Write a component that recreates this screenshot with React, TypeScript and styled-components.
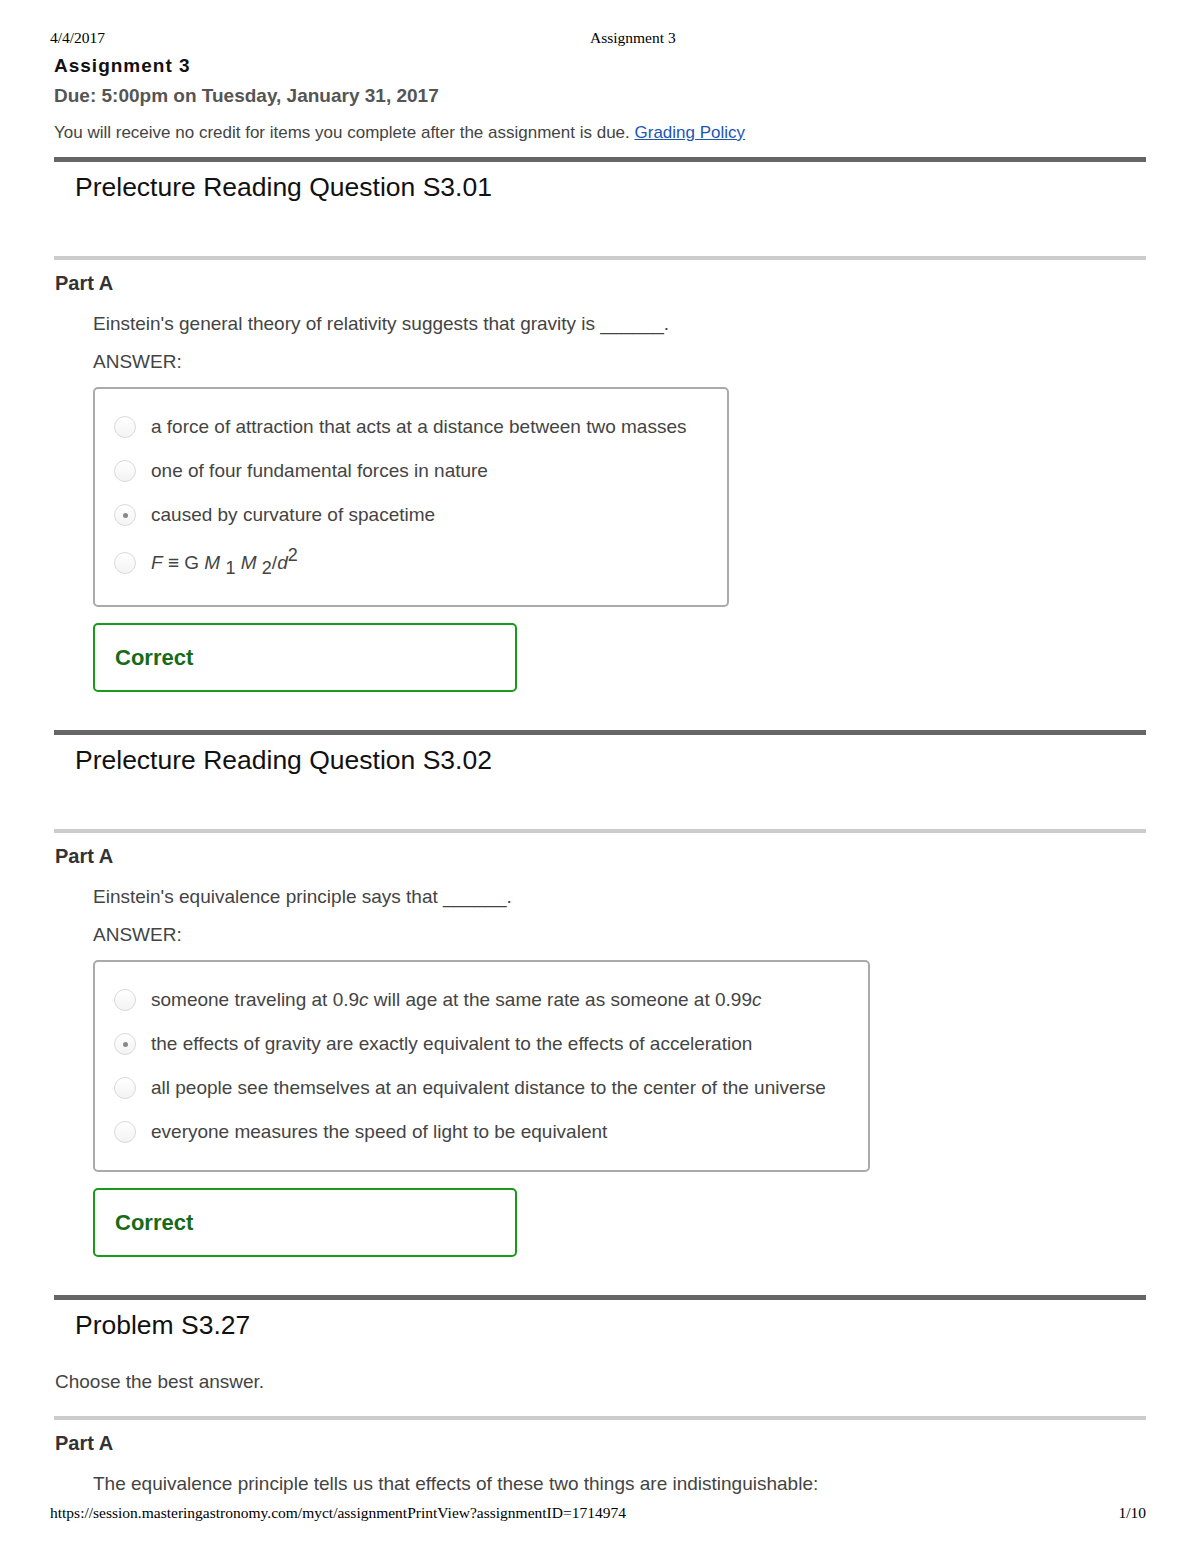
import React from 'react';
import styled, { createGlobalStyle } from 'styled-components';

const GlobalStyle = createGlobalStyle`
  html, body {
    margin: 0;
    padding: 0;
    background: #fff;
  }
  body {
    font-family: "Liberation Sans", Arial, sans-serif;
    color: #444;
  }
`;

const Page = styled.div`
  width: 1200px;
  padding-top: 30px;
  box-sizing: border-box;
`;

const PrintHeader = styled.div`
  display: grid;
  grid-template-columns: 540px 1fr;
  padding-left: 50px;
  font-family: "Liberation Serif", "Times New Roman", serif;
  font-size: 15.5px;
  line-height: 16px;
  color: #000;
`;

const Content = styled.div`
  margin: 0 54px;
`;

const AssignmentTitle = styled.h1`
  margin: 8px 0 0;
  font-size: 19px;
  line-height: 24px;
  font-weight: bold;
  letter-spacing: 1px;
  color: #111;
`;

const Due = styled.div`
  margin-top: 7px;
  font-size: 19px;
  line-height: 22px;
  font-weight: bold;
  color: #555;
`;

const Notice = styled.div`
  margin-top: 16px;
  font-size: 17px;
  line-height: 20px;
  color: #444;

  a {
    color: #1d55b5;
    text-decoration: underline;
  }
`;

const Section = styled.section<{ $first?: boolean }>`
  border-top: 5px solid #666;
  margin-top: ${p => (p.$first ? '14px' : '38px')};
`;

const SectionTitle = styled.h2`
  margin: 10px 0 0 21px;
  font-size: 26.5px;
  line-height: 30px;
  font-weight: normal;
  color: #111;
`;

const Intro = styled.div`
  margin-top: 31px;
  padding: 0 0 23px 1px;
  font-size: 19px;
  line-height: 22px;
  color: #444;
`;

const Part = styled.div`
  border-top: 4px solid #ccc;
`;

const PartTitle = styled.h3`
  margin: 11px 0 0 1px;
  font-size: 20px;
  line-height: 24px;
  font-weight: bold;
  color: #333;
`;

const PartBody = styled.div`
  padding-left: 39px;
`;

const Question = styled.p`
  margin: 18px 0 0;
  font-size: 19px;
  line-height: 22px;
  color: #444;
`;

const AnswerLabel = styled.div`
  margin-top: 16px;
  font-size: 19px;
  line-height: 22px;
  color: #444;
`;

const Options = styled.div<{ $width: number }>`
  width: ${p => p.$width}px;
  box-sizing: border-box;
  margin-top: 14px;
  padding: 16px 0 16px 19px;
  border: 2px solid #aaa;
  border-radius: 5px;
  display: flex;
  flex-direction: column;
`;

const Option = styled.label`
  display: flex;
  align-items: center;
  gap: 15px;
  min-height: 44px;
  font-size: 19px;
  line-height: 22px;
  color: #444;
`;

const Radio = styled.span<{ $checked?: boolean }>`
  width: 22px;
  height: 22px;
  flex: none;
  box-sizing: border-box;
  border: 1.5px solid #dadada;
  border-radius: 50%;
  background: linear-gradient(#fff, #f3f3f3);
  display: flex;
  align-items: center;
  justify-content: center;

  &::after {
    content: '';
    display: ${p => (p.$checked ? 'block' : 'none')};
    width: 5px;
    height: 5px;
    border-radius: 50%;
    background: #888;
  }
`;

const Formula = styled.span`
  display: inline-block;
  padding: 15px 0;
  line-height: 22px;

  sub,
  sup {
    font-size: 18px;
    line-height: 0;
  }
  sup {
    vertical-align: 8px;
  }
  sub {
    vertical-align: -5px;
  }
`;

const Result = styled.div`
  width: 424px;
  height: 69px;
  box-sizing: border-box;
  margin-top: 16px;
  padding-left: 20px;
  border: 2px solid #1a9a1a;
  border-radius: 5px;
  display: flex;
  align-items: center;
  font-size: 22px;
  font-weight: bold;
  color: #176b17;
`;

const PrintFooter = styled.div`
  display: flex;
  justify-content: space-between;
  margin-top: 10px;
  padding: 0 54px 0 50px;
  font-family: "Liberation Serif", "Times New Roman", serif;
  font-size: 15.5px;
  line-height: 16px;
  color: #000;
`;

type Choice = { label: React.ReactNode; checked?: boolean };

const MultipleChoice = ({ width, choices }: { width: number; choices: Choice[] }) => (
  <Options $width={width}>
    {choices.map((c, i) => (
      <Option key={i}>
        <Radio $checked={c.checked} />
        <span>{c.label}</span>
      </Option>
    ))}
  </Options>
);

const q1: Choice[] = [
  { label: 'a force of attraction that acts at a distance between two masses' },
  { label: 'one of four fundamental forces in nature' },
  { label: 'caused by curvature of spacetime', checked: true },
  {
    label: (
      <Formula>
        <i>F</i> ≡ G <i>M</i> <sub>1</sub> <i>M</i> <sub>2</sub>/<i>d</i>
        <sup>2</sup>
      </Formula>
    )
  }
];

const q2: Choice[] = [
  {
    label: (
      <>
        someone traveling at 0.9<i>c</i> will age at the same rate as someone at 0.99<i>c</i>
      </>
    )
  },
  { label: 'the effects of gravity are exactly equivalent to the effects of acceleration', checked: true },
  { label: 'all people see themselves at an equivalent distance to the center of the universe' },
  { label: 'everyone measures the speed of light to be equivalent' }
];

export default function App() {
  return (
    <Page>
      <GlobalStyle />
      <PrintHeader>
        <span>4/4/2017</span>
        <span>Assignment 3</span>
      </PrintHeader>
      <Content>
        <AssignmentTitle>Assignment 3</AssignmentTitle>
        <Due>Due: 5:00pm on Tuesday, January 31, 2017</Due>
        <Notice>
          You will receive no credit for items you complete after the assignment is due.{' '}
          <a href="#">Grading Policy</a>
        </Notice>

        <Section $first>
          <SectionTitle>Prelecture Reading Question S3.01</SectionTitle>
          <Intro />
          <Part>
            <PartTitle>Part A</PartTitle>
            <PartBody>
              <Question>Einstein's general theory of relativity suggests that gravity is ______.</Question>
              <AnswerLabel>ANSWER:</AnswerLabel>
              <MultipleChoice width={636} choices={q1} />
              <Result>Correct</Result>
            </PartBody>
          </Part>
        </Section>

        <Section>
          <SectionTitle>Prelecture Reading Question S3.02</SectionTitle>
          <Intro />
          <Part>
            <PartTitle>Part A</PartTitle>
            <PartBody>
              <Question>Einstein's equivalence principle says that ______.</Question>
              <AnswerLabel>ANSWER:</AnswerLabel>
              <MultipleChoice width={777} choices={q2} />
              <Result>Correct</Result>
            </PartBody>
          </Part>
        </Section>

        <Section>
          <SectionTitle>Problem S3.27</SectionTitle>
          <Intro>Choose the best answer.</Intro>
          <Part>
            <PartTitle>Part A</PartTitle>
            <PartBody>
              <Question>The equivalence principle tells us that effects of these two things are indistinguishable:</Question>
            </PartBody>
          </Part>
        </Section>
      </Content>
      <PrintFooter>
        <span>https://session.masteringastronomy.com/myct/assignmentPrintView?assignmentID=1714974</span>
        <span>1/10</span>
      </PrintFooter>
    </Page>
  );
}
